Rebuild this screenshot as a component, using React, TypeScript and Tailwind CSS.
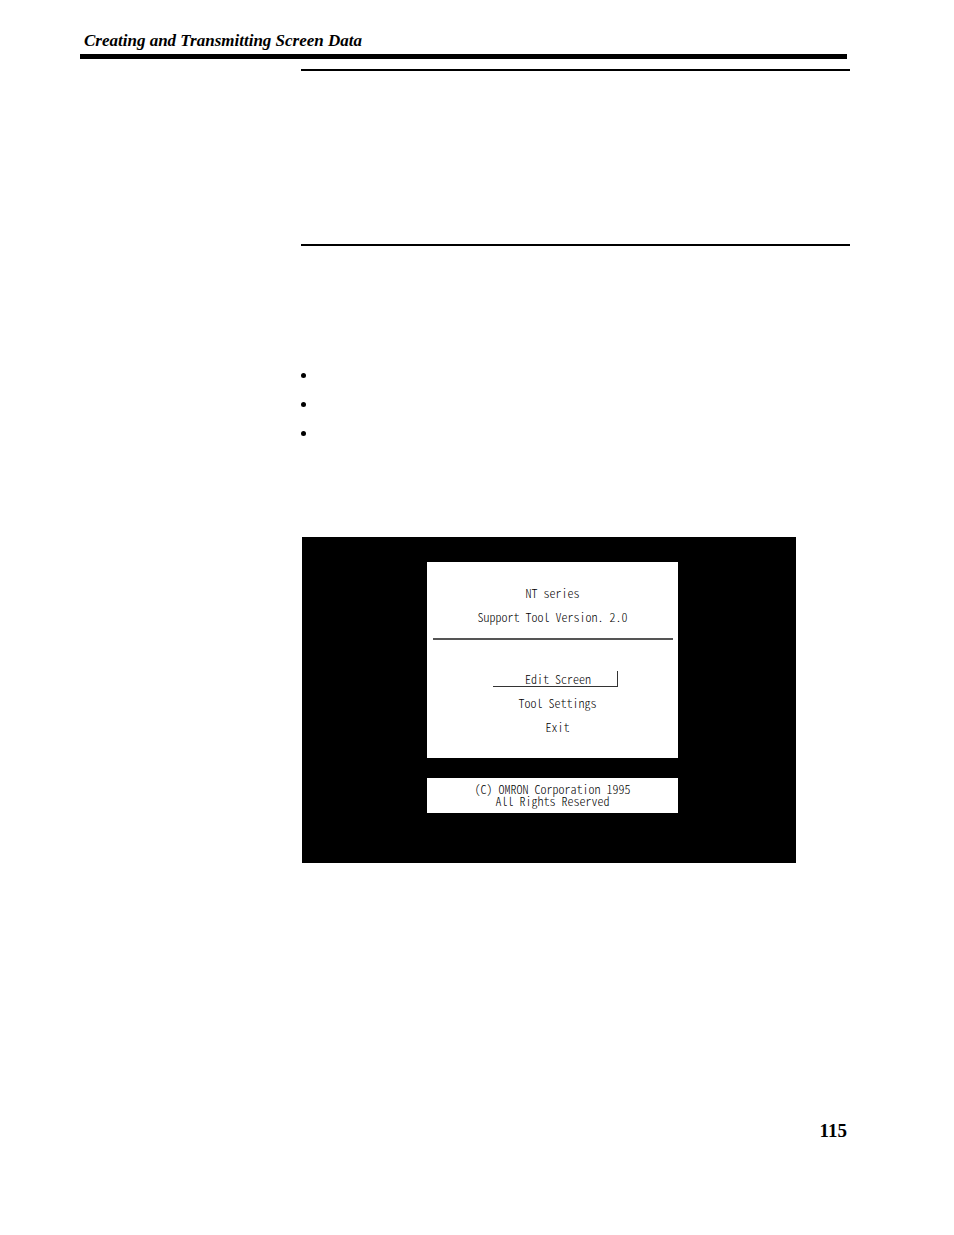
const notes = ['first', 'second', 'third'];

const menuItems = [
  { label: 'Edit Screen', selected: true },
  { label: 'Tool Settings', selected: false },
  { label: 'Exit', selected: false },
];

function SupportToolScreen() {
  return (
    <div className="mr-[54px] flex h-[326px] flex-col items-center bg-black pt-[25px] pl-[7px] font-['Noto_Sans_CJK_JP','Liberation_Mono',monospace] text-[12px] font-light text-black [font-feature-settings:'hwid']">
      <div className="flex h-[196px] w-[251px] flex-col items-center bg-white pt-[19px]">
        <h1 className="h-6 leading-6">NT series</h1>
        <p className="h-6 leading-6">Support Tool Version. 2.0</p>
        <hr className="mt-[9px] w-60 border-t-2 border-[#555]" />
        <nav className="mt-[31px] flex flex-col items-center gap-2 pl-[6px]">
          {menuItems.map(({ label, selected }) => (
            <button
              key={label}
              type="button"
              className={
                selected
                  ? 'flex h-4 w-[125px] items-center justify-center border-r border-b border-[#333] pl-[6px]'
                  : 'flex h-4 items-center justify-center pl-1'
              }
            >
              {label}
            </button>
          ))}
        </nav>
      </div>

      <div className="mt-5 h-[35px] w-[251px] bg-white pt-[5px] text-center leading-3">
        <p>(C) OMRON Corporation 1995</p>
        <p>All Rights Reserved</p>
      </div>
    </div>
  );
}

export default function App() {
  return (
    <div className="min-h-screen bg-white pt-[31px] pr-[104px] pb-10 pl-20 font-['Liberation_Serif',serif] text-black">
      <header className="mr-[3px] h-7 border-b-[5px] border-black pl-1">
        <p className="text-[17px] leading-5 font-bold italic">Creating and Transmitting Screen Data</p>
      </header>

      <main className="mt-[10px] ml-[221px]">
        <section className="h-[177px] border-y-2 border-black" />

        <ul className="mt-[127px] flex flex-col gap-6">
          {notes.map(note => (
            <li key={note} className="h-[5px] w-[5px] rounded-full bg-black" />
          ))}
        </ul>

        <div className="mt-[101px] ml-px">
          <SupportToolScreen />
        </div>
      </main>

      <footer className="mt-64 pr-[3px] text-right text-[19px] leading-6 font-bold">115</footer>
    </div>
  );
}
